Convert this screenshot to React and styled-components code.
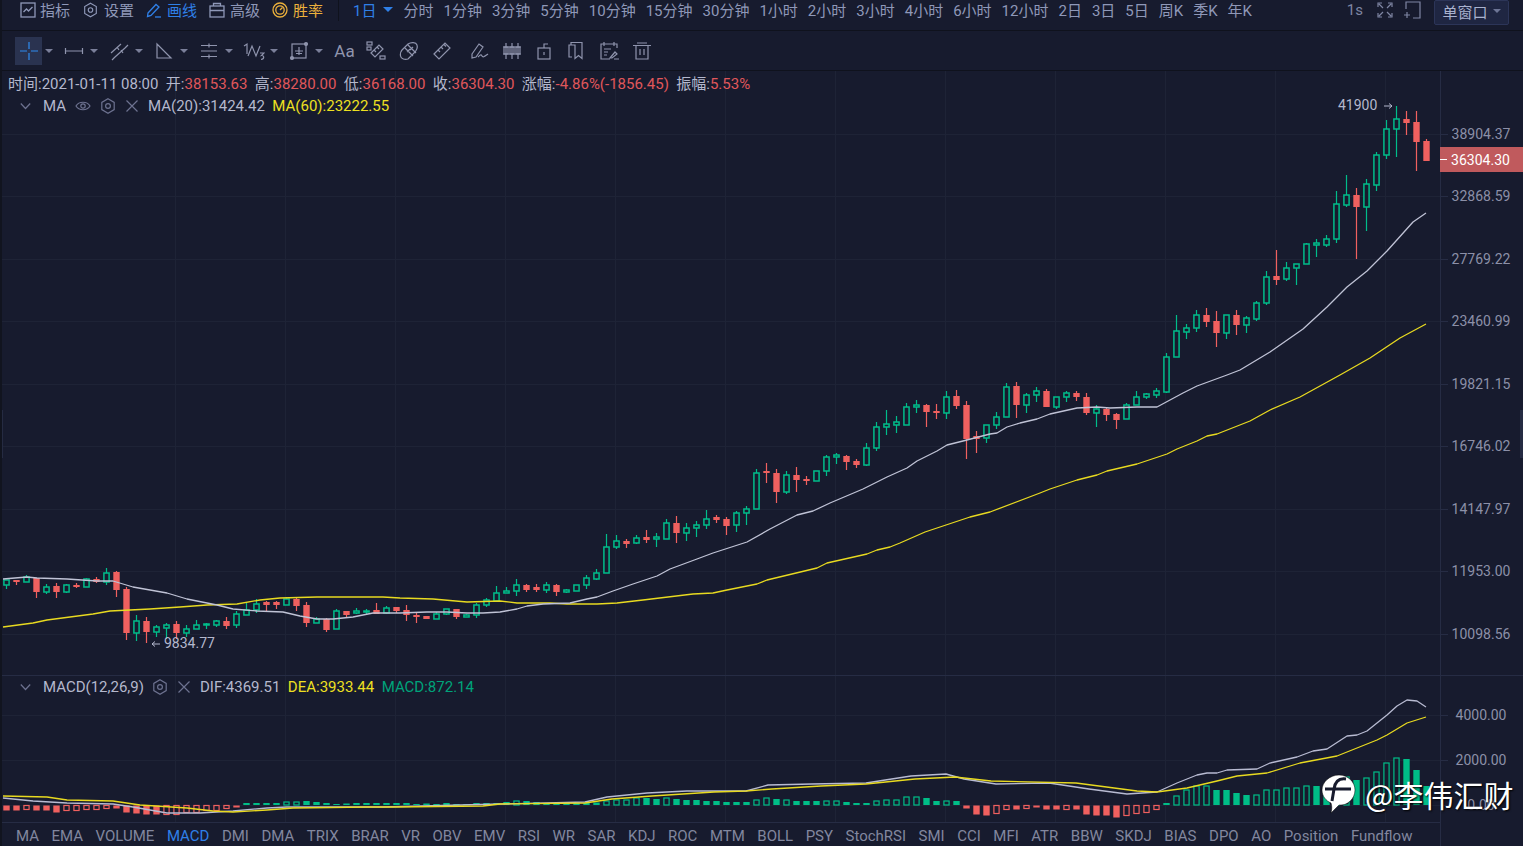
import React from "react";
import styled, { createGlobalStyle } from "styled-components";

const BG = "#171b2e";
const LINE = "#262c44";
const GRID = "#1e2336";
const GREEN = "#00bd8a";
const RED = "#f0605f";

const GlobalStyle = createGlobalStyle`
  html, body { margin: 0; padding: 0; background: ${BG}; overflow: hidden; }
  * { box-sizing: border-box; }
`;

// g/r, body top, body bottom, wick top, wick bottom (page pixels)
const candles = `g 580 585 580 589,r 580 582 580 585,g 577 582 575 582,r 578 592 578 598,g 587 592 584 594,r 586 592 583 598,g 585 592 584 593,r 585 587 583 588,g 579 587 578 587,r 579 582 577 583,
g 573 582 568 585,r 572 590 571 597,r 589 633 587 640,g 621 633 615 641,r 621 632 617 643,g 627 632 625 637,g 625 628 623 639,r 624 633 621 639,g 629 633 625 637,g 625 629 620 629,
g 624 625 623 629,g 621 625 620 627,r 621 626 617 629,g 614 625 611 628,g 610 615 603 615,g 604 610 599 613,r 602 605 601 611,r 602 605 601 609,g 599 605 597 605,r 599 606 598 611,
r 605 623 602 627,g 619 623 617 623,r 619 630 618 632,g 611 629 609 629,r 611 615 611 618,g 611 613 608 614,g 611 612 609 615,r 610 614 603 614,g 608 613 606 614,r 607 611 607 613,
r 610 615 605 621,r 615 617 613 623,r 616 619 616 619,g 614 619 612 619,g 609 614 609 615,r 609 617 609 619,g 615 617 614 617,g 605 615 603 618,g 600 605 598 607,g 593 601 586 601,
g 591 593 587 593,g 585 591 579 596,r 585 590 584 592,r 587 590 584 592,g 585 590 582 593,r 585 592 584 596,g 590 592 589 593,g 585 591 585 591,g 578 585 575 589,g 573 579 569 580,
g 547 573 534 573,g 541 547 535 549,r 541 544 539 548,g 538 543 535 544,r 537 540 530 543,g 537 539 533 547,g 523 539 519 539,r 523 533 516 543,g 528 533 523 541,g 525 528 521 537,
g 519 525 510 529,r 517 520 515 523,r 519 526 517 535,g 513 525 511 532,g 509 513 506 525,g 473 509 469 509,r 471 473 463 483,r 473 492 469 503,g 475 492 471 494,r 475 480 467 492,
r 479 481 476 485,g 471 481 471 481,g 457 471 455 476,g 455 457 453 464,r 456 462 455 470,r 461 465 459 468,g 448 465 443 466,g 427 448 422 451,g 424 427 410 435,g 422 425 416 433,
g 407 425 403 425,g 405 407 400 413,r 405 412 404 427,r 411 413 404 419,g 397 413 391 419,r 396 406 390 409,r 405 439 401 459,r 436 439 431 453,g 425 438 425 443,g 417 425 412 429,
g 387 417 383 417,r 386 405 382 418,g 395 405 393 413,g 391 395 387 402,r 391 407 389 407,g 397 407 397 409,g 393 397 391 402,r 393 397 391 401,r 397 413 393 415,g 409 413 405 427,
r 409 415 407 421,r 414 420 413 429,g 405 419 403 419,g 397 405 391 405,g 394 397 393 399,g 391 395 388 398,g 357 392 353 393,g 331 357 315 357,g 328 332 324 339,g 315 328 310 332,
r 315 322 308 327,r 321 333 311 347,g 315 333 315 339,r 315 325 310 335,g 318 325 316 333,g 303 319 301 321,g 277 303 271 305,r 276 280 250 285,g 268 279 262 281,g 264 268 264 285,
g 244 264 243 264,g 243 245 239 257,g 239 245 235 247,g 204 239 191 243,g 195 205 175 207,r 195 207 188 259,g 184 207 179 231,g 155 185 152 191,g 129 155 120 159,g 119 129 106 157,
r 119 123 111 135,r 122 142 111 171,r 141 161 139 161`
  .split(",")
  .map((row, i) => {
    const [kind, top, bottom, high, low] = row.trim().split(" ");
    return { x: 6 + i * 10, up: kind === "g", top: +top, bottom: +bottom, high: +high, low: +low };
  });

// macd bar heights, "o" means an outlined bar
const hist = `-5 -5 -4o -5 -5 -7 -5o -5o -4o -4o -3o -3 -7 -8 -9 -9 -9o -9o -7o -7o -5o -5o -3o -2
2 2 2 2 3o 3o 4 3 2 1 1.5 2 2 2 2 2 2 1 1.5 1 2 1 1 2 2 2 3 4o 4 3 2 2 2 2 2 2.5 4o 5o 5o 7o 7 6 7o 6 5 5 4 4 3 3 3 5o 7o 6 5o 4 4 4 4o 4o 3 2 2 4o 5o 5o 8o 8o 7 4 4o 4
-3 -9 -10 -8o -4o -4 -3o -2 -4 -4 -4o -4 -9 -10 -10 -12 -10o -8o -7o -4o
2 9o 15o 19o 19o 15 15 12 10 10o 15o 15o 17o 17o 19o 19 19 21o 28o 25 27o 33o 42o 47o 46 35 19`
  .split(/\s+/)
  .map((v, i) => ({ x: 6 + i * 10, value: parseFloat(v), hollow: v.endsWith("o") }));

const ma20 = "3,579 27,577 37,578 67,579 97,581 113,581 133,587 167,593 187,599 217,605 233,609 257,611 283,612 300,616 317,619 333,619 353,617 373,613 400,613 427,612 447,612 467,613 483,613 500,612 517,609 527,606 543,604 570,603 587,599 597,597 613,591 633,584 657,576 670,569 697,559 713,553 747,542 770,529 797,515 813,511 830,503 863,489 887,477 907,468 917,461 937,451 947,445 963,441 990,434 997,433 1007,427 1020,423 1037,419 1050,414 1077,408 1097,407 1110,408 1137,407 1157,407 1183,393 1197,386 1227,375 1240,370 1270,352 1303,329 1327,307 1347,287 1367,271 1387,251 1413,222 1426,213";
const ma60 = "3,627 33,623 47,620 93,614 110,611 150,609 180,607 207,605 237,604 260,600 280,598 317,597 383,597 400,598 433,599 467,602 500,601 517,603 550,603 567,604 597,604 617,603 643,600 693,594 713,593 727,590 757,584 767,580 817,568 827,563 867,554 877,550 890,547 900,543 925,532 970,517 990,512 1040,493 1050,489 1077,480 1097,475 1107,471 1137,464 1167,454 1177,449 1197,441 1207,436 1217,434 1250,421 1270,410 1300,397 1340,375 1370,358 1400,338 1426,324";
const dif = "3,798 33,801 67,803 113,804 133,807 167,813 200,813 233,811 267,808 287,807 300,807 333,807 383,807 500,804 585,802 607,797 647,793 687,791 746,791 768,785 812,784 866,783 911,776 946,774 964,779 996,784 1049,783 1089,789 1127,794 1157,792 1177,783 1197,775 1207,773 1217,773 1227,770 1257,769 1270,763 1297,757 1313,751 1327,749 1347,736 1357,735 1367,731 1387,715 1397,706 1407,700 1417,701 1426,707";
const dea = "3,796 47,797 67,800 113,801 140,805 187,808 213,811 233,812 267,810 293,808 367,807 393,807 483,806 500,804 585,803 612,799 652,796 714,792 746,791 772,789 821,786 866,784 915,779 955,777 991,781 1076,783 1137,791 1157,792 1187,788 1217,781 1237,776 1267,773 1300,763 1337,756 1377,740 1387,735 1407,723 1426,717";

const gridX = Array.from({ length: 12 }, (_, i) => 175 + i * 110);
const priceGrid = [134, 196, 259, 321, 384, 446, 509, 571, 634];
const macdGrid = [715, 760, 805];
const priceLabels = ["38904.37", "32868.59", "27769.22", "23460.99", "19821.15", "16746.02", "14147.97", "11953.00", "10098.56"];
const macdLabels = ["4000.00", "2000.00", "0.00"];
const times = ["分时", "1分钟", "3分钟", "5分钟", "10分钟", "15分钟", "30分钟", "1小时", "2小时", "3小时", "4小时", "6小时", "12小时", "2日", "3日", "5日", "周K", "季K", "年K"];
const indicators = ["MA", "EMA", "VOLUME", "MACD", "DMI", "DMA", "TRIX", "BRAR", "VR", "OBV", "EMV", "RSI", "WR", "SAR", "KDJ", "ROC", "MTM", "BOLL", "PSY", "StochRSI", "SMI", "CCI", "MFI", "ATR", "BBW", "SKDJ", "BIAS", "DPO", "AO", "Position", "Fundflow"];

const Page = styled.div`
  position: relative;
  width: 1523px;
  height: 846px;
  overflow: hidden;
  background: ${BG};
  border-left: 2px solid #11141f;
  color: #b4b8cd;
  font-family: Roboto, "Noto Sans CJK SC", sans-serif;
  font-size: 15px;
`;

const Toolbar = styled.header`
  display: flex;
  align-items: center;
  height: 31px;
  padding: 0 14px 11px 18px;
  border-bottom: 1px solid #0f121d;
  color: #8f98b8;
`;

const ToolItem = styled.div`
  display: flex;
  align-items: center;
  gap: ${(p) => p.$gap || 5}px;
  width: 51px;
  margin-right: 12px;
  color: ${(p) => p.$color || "inherit"};
  white-space: nowrap;
`;

const Divider = styled.div`
  width: 1px;
  height: 30px;
  margin: -9px 14px 0 3px;
  background: #0f121d;
  align-self: flex-start;
`;

const Period = styled.div`
  display: flex;
  align-items: center;
  gap: 7px;
  margin-right: 10px;
  color: #2f80e8;
`;

const Caret = styled.i`
  display: block;
  width: 0;
  height: 0;
  border-left: ${(p) => p.$size || 4}px solid transparent;
  border-right: ${(p) => p.$size || 4}px solid transparent;
  border-top: ${(p) => p.$size || 4}px solid ${(p) => p.$color || "#7a7f99"};
`;

const TimeList = styled.div`
  display: flex;
  gap: 10px;
  white-space: nowrap;
`;

const RightTools = styled.div`
  display: flex;
  align-items: center;
  margin-left: auto;
  gap: 13px;
  color: #7f86a3;
`;

const WideGap = styled.span`
  display: flex;
  margin-left: 1px;
  margin-right: -3px;
`;

const WindowButton = styled.div`
  display: flex;
  align-items: center;
  justify-content: center;
  gap: 5px;
  width: 75px;
  height: 25px;
  padding-bottom: 2px;
  margin: -1px 0 -8px 0;
  align-self: flex-start;
  background: #1f2642;
  border: 1px solid #2c3558;
  border-radius: 2px;
  color: #a9b2ce;
`;

const DrawBar = styled.nav`
  display: flex;
  align-items: center;
  height: 40px;
  padding-left: 13px;
  border-bottom: 1px solid #0f121d;
  color: #8f94ad;
`;

const ToolGroup = styled.div`
  display: flex;
  align-items: center;
  width: 45px;
  padding-top: 1px;
`;

const IconBox = styled.div`
  display: flex;
  align-items: center;
  justify-content: center;
  width: 27px;
  height: 28px;
  margin-right: 3px;
  background: ${(p) => (p.$active ? "#2a3350" : "transparent")};
  color: ${(p) => (p.$active ? "#2f8cf0" : "inherit")};
`;

const ToolSlot = styled.div`
  display: flex;
  align-items: center;
  justify-content: center;
  width: ${(p) => p.$width || 33}px;
  height: 28px;
  padding-left: ${(p) => p.$shift || 0}px;
  font-size: 17px;
`;

const Body = styled.div`
  display: flex;
`;

const ChartColumn = styled.div`
  width: 1438px;
`;

const Pane = styled.section`
  position: relative;
  height: ${(p) => p.$height}px;
  border-bottom: 1px solid ${LINE};
`;

const ChartSvg = styled.svg`
  display: block;
  width: 100%;
  height: 100%;
`;

const InfoRow = styled.div`
  position: absolute;
  top: 4px;
  left: 6px;
  display: flex;
  gap: 7.4px;
  line-height: 19px;
  white-space: nowrap;
`;

const Legend = styled.div`
  position: absolute;
  top: ${(p) => p.$top}px;
  left: 18px;
  display: flex;
  align-items: center;
  height: 20px;
  color: #b4b8cd;
  white-space: nowrap;
`;

const LegendName = styled.span`
  margin: 0 ${(p) => p.$gap || 9}px 0 12px;
`;

const LegendToggle = styled.span`
  display: flex;
  color: #6d7290;
`;

const LegendIcon = styled.span`
  display: flex;
  margin-right: 9px;
  color: #6d7290;
`;

const LegendValue = styled.span`
  margin-right: 7.5px;
  color: ${(p) => p.$color || "#b4b8cd"};
`;

const Red = styled.span`
  color: #e0575b;
`;

const TabBar = styled.footer`
  display: flex;
  align-items: center;
  gap: 12.5px;
  height: 23px;
  padding: 3px 0 0 14px;
  color: #82879f;
  white-space: nowrap;
`;

const Tab = styled.span`
  color: ${(p) => (p.$active ? "#2f80e8" : "inherit")};
`;

const AxisColumn = styled.aside`
  position: relative;
  flex: 1;
  height: 775px;
  border-left: 1px solid ${LINE};
  color: #8c90a8;
  font-size: 14px;
`;

const AxisPane = styled.div`
  display: grid;
  grid-auto-rows: ${(p) => p.$step}px;
  height: ${(p) => p.$height}px;
  padding-top: ${(p) => p.$top}px;
  border-bottom: ${(p) => (p.$line ? `1px solid ${LINE}` : "none")};
`;

const AxisLabel = styled.div`
  position: relative;
  display: flex;
  align-items: center;
  justify-content: center;
  padding-right: 2px;

  &::before {
    content: "";
    position: absolute;
    left: 0;
    top: 50%;
    width: 7px;
    height: 1px;
    background: ${LINE};
  }
`;

const PriceTag = styled.div`
  position: absolute;
  top: 76px;
  left: -1px;
  right: 0;
  height: 25px;
  display: flex;
  align-items: center;
  justify-content: center;
  padding-right: 2px;
  background: #c05a5d;
  color: #fff;

  &::before {
    content: "";
    position: absolute;
    left: 0;
    top: 12px;
    width: 7px;
    height: 1px;
    background: #fff;
  }
`;

const EdgeHandle = styled.div`
  position: absolute;
  top: 410px;
  ${(p) => (p.$right ? "right: 0;" : "left: -2px;")}
  width: 3px;
  height: 48px;
  background: #252b42;
`;

const Watermark = styled.div`
  position: absolute;
  left: 1318px;
  top: 773px;
  display: flex;
  align-items: center;
  gap: 9px;
  color: #fff;
  font-family: "Noto Sans CJK SC", sans-serif;
  font-size: 30px;
  line-height: 40px;
  text-shadow: 1px 1px 2px #000;
  white-space: nowrap;
`;

const Icon = ({ w = 20, h = 20, vb, children, sw = 1.2 }) => (
  <svg width={w} height={h} viewBox={vb || `0 0 ${w} ${h}`} fill="none" stroke="currentColor" strokeWidth={sw}>
    {children}
  </svg>
);

const Hexagon = ({ s = 16 }) => (
  <Icon w={s} h={s} vb="0 0 16 16">
    <path d="M8 .8 14.2 4.4V11.6L8 15.2 1.8 11.6V4.4Z" />
    <circle cx="8" cy="8" r="2.4" />
  </Icon>
);

const CloseX = () => (
  <Icon w={14} h={14}>
    <path d="M1.5 1.5 12.5 12.5M12.5 1.5 1.5 12.5" />
  </Icon>
);

const Chevron = () => (
  <Icon w={11} h={8}>
    <path d="M.8 1.5 5.5 6.5 10.2 1.5" />
  </Icon>
);

const topIcons = {
  chart: (
    <Icon w={16} h={16} sw={1.3}>
      <rect x="1" y="1" width="14" height="14" />
      <path d="M3.5 10 6.5 7 8.5 9 12.5 5" />
    </Icon>
  ),
  pen: (
    <Icon w={16} h={16} sw={1.3}>
      <path d="M2 11 10 2.5 13 5 5 13.5 1.5 14.5Z" />
      <path d="M9 15H15" />
    </Icon>
  ),
  box: (
    <Icon w={16} h={16} sw={1.3}>
      <rect x="1" y="4" width="14" height="11" />
      <path d="M1 8.5H15M4.5 4V1.5H11.5V4" />
    </Icon>
  ),
  gauge: (
    <Icon w={16} h={16} sw={1.3}>
      <circle cx="8" cy="8" r="7" />
      <circle cx="8" cy="8" r="4.2" />
      <path d="M8 8 10.5 5.5" />
    </Icon>
  ),
};

const drawIcons = [
  <Icon key="a"><path d="M1 10H8M12 10H19M10 1V8M10 12V19" /></Icon>,
  <Icon key="b"><path d="M1.5 10H18.5M1.5 7V13M18.5 7V13" /></Icon>,
  <Icon key="c"><path d="M2 12 12 3M6 16 16 7M3 19 6 16M16 7 19 4M8 6 10 9M12 9 14 12" /></Icon>,
  <Icon key="d"><path d="M3 3V17H17Z" /></Icon>,
  <Icon key="e"><path d="M2 4.5H18M2 10H18M2 15.5H18M10 2.5V6.5M10 13.5V17.5" /></Icon>,
  <Icon key="f" w={22}><path d="M1 5 4 3V13M5 15 9 5 13 15 17 5" /><path d="M17 12H21L18.5 14.5C21 14 22 18 18 18.5" /></Icon>,
  <Icon key="g" w={20}><rect x="3" y="3" width="14" height="14" /><path d="M10 6V14M6 10H14M7 12.5H13" /><circle cx="17" cy="3" r="1.5" fill="currentColor" /><circle cx="3" cy="17" r="1.5" fill="currentColor" /></Icon>,
];

const sideIcons = [
  <Icon key="a"><rect x="1" y="1" width="5" height="3" /><rect x="1" y="6" width="4" height="3" /><rect x="14" y="15" width="5" height="3" /><path d="M5 12 13 4 17 8 9 16ZM8 9 10 11M11 6 13 8" /></Icon>,
  <Icon key="b"><path d="M3 9 9 3C12 1 17 1 18 4 19 7 17 10 15 12L9 18C6 19 2 18 1.5 15 1 13 2 10 3 9ZM6 7 14 15M9 4 17 12M11 8 8 11M14 6 11 9" /></Icon>,
  <Icon key="c"><path d="M2 13 13 2 18 7 7 18ZM6 9 8 11M9 6 11 8M12 3.5 14 5.5" /></Icon>,
  <Icon key="d"><path d="M2 13 9 3 13 6 6 16 2 17ZM8 16C10 14 11 13 12 15 13 17 15 15 18 13" /></Icon>,
  <Icon key="e"><path d="M4 2V18M10 2V18M16 2V18M1 6H19M1 13H19" /><rect x="2" y="6" width="4" height="7" /><rect x="8" y="6" width="4" height="7" /><rect x="14" y="6" width="4" height="7" /></Icon>,
  <Icon key="f"><rect x="4" y="7" width="12" height="11" /><path d="M10 7V3H14M10 11V14" /></Icon>,
  <Icon key="g"><path d="M5 4V1.5H16V17.5L12.5 14.5 9 17.5V4H3V16H6" /></Icon>,
  <Icon key="h"><path d="M18 7V3H2V18H11M5 1V5M15 1V5M5 8H12M5 11H9M5 14H8" /><path d="M11 17 16 11 18 13 13 17ZM15 18H20" /></Icon>,
  <Icon key="i"><path d="M1 4.5H19M5 2H15M4 4.5V18H16V4.5M8 8V14M12 8V14" /></Icon>,
];

const slotSizes = [{}, {}, {}, { $width: 37, $shift: 6 }, {}, { $width: 31 }, {}, {}, {}];

const Candle = ({ c }) => {
  const color = c.up ? GREEN : RED;
  const center = c.x + 0.5;
  return (
    <g>
      <path d={`M${center} ${c.high}V${c.top}M${center} ${c.bottom}V${c.low}`} stroke={color} strokeWidth="1.2" />
      {c.up ? (
        <rect x={c.x - 2.1} y={c.top} width="5.2" height={Math.max(c.bottom - c.top, 1)} fill={BG} stroke={color} strokeWidth="1.5" />
      ) : (
        <rect x={c.x - 2.7} y={c.top} width="6.4" height={Math.max(c.bottom - c.top, 2)} fill={color} />
      )}
    </g>
  );
};

const Bar = ({ b }) => {
  const color = b.value > 0 ? "#00bd87" : RED;
  const y = b.value > 0 ? 805 - b.value : 805.5;
  const h = Math.abs(b.value);
  return b.hollow ? (
    <rect x={b.x - 2.1} y={y} width="5.2" height={h} fill={BG} stroke={color} strokeWidth="1.2" />
  ) : (
    <rect x={b.x - 2.7} y={y} width="6.4" height={h} fill={color} />
  );
};

const GridLines = ({ rows, from, to }) => (
  <g stroke={GRID} strokeWidth="1">
    {rows.map((y) => (
      <line key={y} x1="2" x2="1440" y1={y + 0.5} y2={y + 0.5} />
    ))}
    {gridX.map((x) => (
      <line key={x} x1={x + 0.5} x2={x + 0.5} y1={from} y2={to} />
    ))}
  </g>
);

const Trend = ({ points, color }) => <polyline points={points} fill="none" stroke={color} strokeWidth="1.3" strokeLinejoin="round" />;

export default function App() {
  return (
    <Page>
      <GlobalStyle />
      <Toolbar>
        <ToolItem $gap={4}>{topIcons.chart}指标</ToolItem>
        <ToolItem $gap={6}><Hexagon />设置</ToolItem>
        <ToolItem $color="#2f80e8">{topIcons.pen}画线</ToolItem>
        <ToolItem>{topIcons.box}高级</ToolItem>
        <ToolItem $color="#ecb13c">{topIcons.gauge}胜率</ToolItem>
        <Divider />
        <Period>1日<Caret $size={5} $color="#2f80e8" /></Period>
        <TimeList>
          {times.map((t) => (
            <span key={t}>{t}</span>
          ))}
        </TimeList>
        <RightTools>
          <span>1s</span>
          <WideGap>
            <Icon w={16} h={16}>
              <path d="M1 5V1H5M11 1H15V5M15 11V15H11M5 15H1V11M2 2 6 6M14 2 10 6M14 14 10 10M2 14 6 10" />
            </Icon>
          </WideGap>
          <Icon w={18} h={18}>
            <path d="M3 8V1H17V17H10M1 14H7M4 11V17" />
          </Icon>
          <WindowButton>单窗口<Caret $color="#6d7595" /></WindowButton>
        </RightTools>
      </Toolbar>

      <DrawBar>
        {drawIcons.map((icon, i) => (
          <ToolGroup key={i}>
            <IconBox $active={i === 0}>{icon}</IconBox>
            <Caret />
          </ToolGroup>
        ))}
        <ToolSlot $width={29}>Aa</ToolSlot>
        {sideIcons.map((icon, i) => (
          <ToolSlot key={i} {...slotSizes[i]}>{icon}</ToolSlot>
        ))}
      </DrawBar>

      <Body>
        <ChartColumn>
          <Pane $height={605}>
            <ChartSvg viewBox="2 71 1438 604">
              <GridLines rows={priceGrid} from={71} to={675} />
              {candles.map((c) => (
                <Candle key={c.x} c={c} />
              ))}
              <Trend points={ma60} color="#e8da20" />
              <Trend points={ma20} color="#c0c3d6" />
              <text x="1338" y="110" fill="#b4b8cd" fontSize="14">41900</text>
              <path d="M1384 106H1392M1389 103.5 1392 106 1389 108.5" fill="none" stroke="#b4b8cd" />
              <text x="164" y="648" fill="#b4b8cd" fontSize="14">9834.77</text>
              <path d="M160 644H152M155 641.5 152 644 155 646.5" fill="none" stroke="#b4b8cd" />
            </ChartSvg>
            <InfoRow>
              <span>时间:2021-01-11 08:00</span>
              <span>开:<Red>38153.63</Red></span>
              <span>高:<Red>38280.00</Red></span>
              <span>低:<Red>36168.00</Red></span>
              <span>收:<Red>36304.30</Red></span>
              <span>涨幅:<Red>-4.86%(-1856.45)</Red></span>
              <span>振幅:<Red>5.53%</Red></span>
            </InfoRow>
            <Legend $top={25}>
              <LegendToggle><Chevron /></LegendToggle>
              <LegendName>MA</LegendName>
              <LegendIcon>
                <Icon w={16} h={12}>
                  <path d="M1 6C4 1 12 1 15 6 12 11 4 11 1 6Z" />
                  <circle cx="8" cy="6" r="2.2" />
                </Icon>
              </LegendIcon>
              <LegendIcon><Hexagon /></LegendIcon>
              <LegendIcon><CloseX /></LegendIcon>
              <LegendValue>MA(20):31424.42</LegendValue>
              <LegendValue $color="#eee021">MA(60):23222.55</LegendValue>
            </Legend>
          </Pane>

          <Pane $height={147}>
            <ChartSvg viewBox="2 676 1438 146">
              <GridLines rows={macdGrid} from={676} to={822} />
              {hist.map((b) => (
                <Bar key={b.x} b={b} />
              ))}
              <Trend points={dif} color="#b8bbd2" />
              <Trend points={dea} color="#e8da20" />
            </ChartSvg>
            <Legend $top={1}>
              <LegendToggle><Chevron /></LegendToggle>
              <LegendName $gap={8}>MACD(12,26,9)</LegendName>
              <LegendIcon><Hexagon /></LegendIcon>
              <LegendIcon><CloseX /></LegendIcon>
              <LegendValue>DIF:4369.51</LegendValue>
              <LegendValue $color="#eee021">DEA:3933.44</LegendValue>
              <LegendValue $color="#00a37a">MACD:872.14</LegendValue>
            </Legend>
          </Pane>

          <TabBar>
            {indicators.map((name) => (
              <Tab key={name} $active={name === "MACD"}>{name}</Tab>
            ))}
          </TabBar>
        </ChartColumn>

        <AxisColumn>
          <AxisPane $height={605} $step={62.5} $top={31.7} $line>
            {priceLabels.map((l) => (
              <AxisLabel key={l}>{l}</AxisLabel>
            ))}
          </AxisPane>
          <AxisPane $height={170} $step={45} $top={16}>
            {macdLabels.map((l) => (
              <AxisLabel key={l}>{l}</AxisLabel>
            ))}
          </AxisPane>
          <PriceTag>36304.30</PriceTag>
        </AxisColumn>
      </Body>

      <EdgeHandle />
      <EdgeHandle $right />

      <Watermark>
        <svg width="36" height="42" viewBox="0 0 36 42">
          <path d="M19 2C28 2 35 9 35 17 35 26 27 33 19 32L11 40C12 36 12 33 11 30 6 28 2 23 2 17 2 9 10 2 19 2Z" fill="#fff" stroke="#000" strokeWidth=".5" />
          <path d="M26 6C19 5 15 9 14 16L12 28M5 16H31" fill="none" stroke={BG} strokeWidth="3" />
        </svg>
        <span>@李伟汇财</span>
      </Watermark>
    </Page>
  );
}
